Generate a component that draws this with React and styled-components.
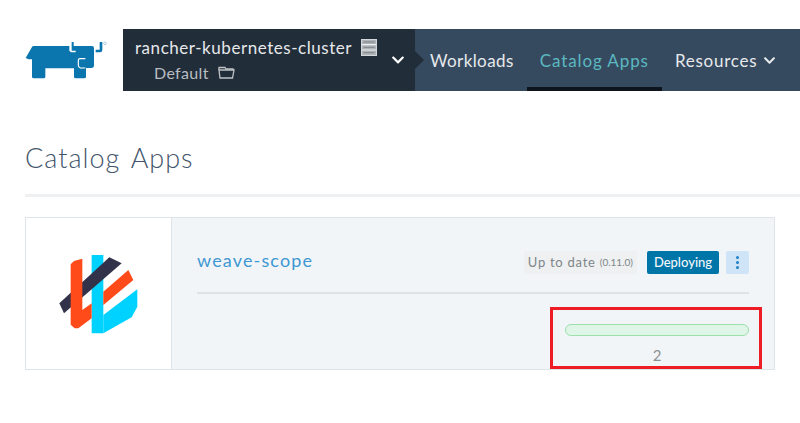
import React from "react";
import styled, { createGlobalStyle } from "styled-components";
import { FaChevronDown } from "react-icons/fa";

const GlobalStyle = createGlobalStyle`
  html, body { margin: 0; padding: 0; background: #fff; }
  body { font-family: "Lato", "Open Sans", sans-serif; width: 800px; height: 423px; overflow: hidden; }
`;

const Page = styled.div`
  padding-top: 29px;
`;

const Header = styled.header`
  display: flex;
  height: 62px;
  align-items: stretch;
`;

const LogoSlot = styled.div`
  width: 123px;
  flex: none;
  display: flex;
  align-items: center;
  padding-left: 20px;
  box-sizing: border-box;
`;

const ClusterBox = styled.div`
  width: 292px;
  flex: none;
  background: #222d3a;
  color: #e6e8ea;
  position: relative;
  display: flex;
  align-items: center;
  justify-content: space-between;
  padding: 0 10px 0 12px;
  box-sizing: border-box;

  &::after {
    content: "";
    position: absolute;
    right: -9px;
    top: 22px;
    border-left: 9px solid #222d3a;
    border-top: 9px solid transparent;
    border-bottom: 9px solid transparent;
  }
`;

const ClusterText = styled.div`
  display: flex;
  flex-direction: column;
  gap: 5px;
`;

const ClusterLine = styled.div`
  display: flex;
  align-items: center;
  gap: ${(p) => p.$gap || 9}px;
  font-size: ${(p) => p.$size || 17}px;
  letter-spacing: ${(p) => p.$spacing || 0.55}px;
  line-height: 20px;
  margin-left: ${(p) => p.$indent || 0}px;
  color: ${(p) => p.$color || "#e6e8ea"};
`;

const Nav = styled.nav`
  flex: 1;
  background: #364a5f;
  display: flex;
  padding-left: 2px;
`;

const NavItem = styled.div`
  display: flex;
  align-items: center;
  gap: 6px;
  padding: 0 13px;
  font-size: 17px;
  letter-spacing: ${(p) => p.$spacing}px;
  color: ${(p) => (p.$active ? "#5bb8c0" : "#e6e9ec")};
  border-bottom: 4px solid ${(p) => (p.$active ? "#0e141b" : "transparent")};
  border-top: 4px solid transparent;
`;

const Main = styled.main`
  padding-left: 25px;
`;

const Title = styled.h1`
  margin: 0;
  padding-top: 50px;
  height: 53px;
  font-size: 27px;
  line-height: 34px;
  font-weight: 300;
  letter-spacing: 1px;
  word-spacing: 3px;
  color: #43556b;
  border-bottom: 3px solid #eef0f1;
`;

const Card = styled.section`
  display: flex;
  width: 750px;
  height: 153px;
  margin-top: 20px;
  box-sizing: border-box;
  border: 1px solid #dfe4e8;
  background: #f2f5f7;
  position: relative;
`;

const IconPane = styled.div`
  width: 146px;
  flex: none;
  background: #fff;
  border-right: 1px solid #dfe4e8;
  display: flex;
  align-items: center;
  justify-content: center;
  padding: 3px 1px 0 0;
  box-sizing: border-box;
`;

const Body = styled.div`
  flex: 1;
  padding: 0 25px;
  display: flex;
  flex-direction: column;
`;

const TitleRow = styled.div`
  height: 76px;
  display: flex;
  align-items: center;
  justify-content: space-between;
  border-bottom: 2px solid #dfe3e6;
  padding-top: 14px;
  box-sizing: border-box;
`;

const AppName = styled.a`
  font-size: 18px;
  letter-spacing: 1.15px;
  color: #3d98d3;
  margin-bottom: 4px;
`;

const Actions = styled.div`
  display: flex;
  align-items: center;
  gap: 7px;
  margin-top: 1px;
`;

const Upgrade = styled.span`
  background: #eef0f1;
  color: #7f8689;
  font-size: 13px;
  letter-spacing: 0.75px;
  height: 23px;
  line-height: 23px;
  padding: 0 4px;
  margin-right: 3px;
  border-radius: 2px;
  display: flex;
  align-items: center;
  gap: 4px;

  small {
    font-size: 10px;
    letter-spacing: 0;
  }
`;

const StateBadge = styled.span`
  background: #0075a8;
  color: #f2f7fa;
  font-size: 13px;
  font-weight: 500;
  height: 23px;
  line-height: 23px;
  border-radius: 2px;
  width: 72px;
  text-align: center;
`;

const MoreButton = styled.button`
  width: 23px;
  height: 23px;
  border: 0;
  padding: 0;
  background: #cfe4f6;
  border-radius: 2px;
  display: flex;
  flex-direction: column;
  align-items: center;
  justify-content: center;
  gap: 2px;

  i {
    display: block;
    width: 3px;
    height: 3px;
    border-radius: 50%;
    background: #1f7fc4;
  }
`;

const Stats = styled.div`
  align-self: flex-end;
  width: 184px;
  margin-top: 30px;
  text-align: center;
`;

const Bar = styled.div`
  height: 10px;
  background: #dff5e8;
  border: 1px solid #9be0ad;
  border-radius: 6px;
`;

const Count = styled.div`
  margin-top: 10px;
  font-size: 15px;
  line-height: 18px;
  color: #8b9094;
`;

const Highlight = styled.div`
  position: absolute;
  left: 524px;
  top: 89px;
  width: 212px;
  height: 62px;
  box-sizing: border-box;
  border: 3px solid #ee1c25;
`;

const RancherLogo = () => (
  <svg width="96" height="48" viewBox="0 0 288 144">
    <path
      fill="#0b76ad"
      d="M17 66 L36 33 Q37 30 41 30 L148 30 L148 44 L153 49 L167 49 L167 44 L155 44 L155 18 L161 18 L161 30 L216 30 Q222 30 222 36 L222 88 Q222 96 214 96 L198 96 L198 122 Q198 127 193 127 L167 127 Q162 127 162 122 L162 97 L76 97 L76 122 Q76 127 71 127 L41 127 Q36 127 36 122 L36 70 L26 70 Z"
    />
    <path fill="none" stroke="#fff" strokeWidth="3.5" d="M196 68 L180 68 Q175 68 175 73 L175 88 Q175 94 181 96 L196 96" />
    <path fill="#0b76ad" d="M227 41 L239 41 L239 18 L247 18 L247 42 Q247 49 240 49 L227 49 Z" />
    <circle cx="255" cy="22" r="4" fill="none" stroke="#6fa9c9" strokeWidth="1.5" />
  </svg>
);

const ServerIcon = () => (
  <svg width="16" height="17" viewBox="0 0 16 17">
    <rect x="0.5" y="0.5" width="15" height="16" fill="#aeb3b7" stroke="#d4d7d9" />
    <path d="M1 5.6H15M1 11H15" stroke="#eceef0" strokeWidth="1.1" />
    <path d="M2.5 3H13.5M2.5 8.3H13.5M2.5 13.7H13.5" stroke="#7c8389" strokeWidth="1" />
  </svg>
);

const FolderIcon = () => (
  <svg width="17" height="13" viewBox="0 0 17 13" fill="none" stroke="#bfc3c6" strokeWidth="1.3">
    <path d="M1 4 V1.5 H7 L8 3 H15 V4" />
    <path d="M1 4 H16 L14.5 12 H2 Z" />
  </svg>
);

const WeaveLogo = () => (
  <svg width="96" height="90" viewBox="0 0 288 270">
    <path fill="#00d2ff" d="M125 15 H160 V250 H125 Z" />
    <path fill="#32324b" d="M28 160 L178 22 L215 40 L42 190 Z" />
    <path fill="#ff4b19" d="M62 43 L72 33 L97 26 V180 L125 160 V205 L85 235 H74 L62 224 Z" />
    <path fill="#ff4b19" d="M160 125 L235 60 L250 90 L160 165 Z" />
    <path fill="#00d2ff" d="M160 195 L262 118 V170 L245 202 L160 250 Z" />
  </svg>
);

const App = () => (
  <Page>
    <GlobalStyle />
    <Header>
      <LogoSlot>
        <RancherLogo />
      </LogoSlot>
      <ClusterBox>
        <ClusterText>
          <ClusterLine>
            rancher-kubernetes-cluster <ServerIcon />
          </ClusterLine>
          <ClusterLine $indent={19} $size={16} $gap={9} $spacing={0.35} $color="#b9bdc1">
            Default <FolderIcon />
          </ClusterLine>
        </ClusterText>
        <FaChevronDown color="#fff" size={14} />
      </ClusterBox>
      <Nav>
        <NavItem $spacing={0.4}>Workloads</NavItem>
        <NavItem $active $spacing={0.9}>
          Catalog Apps
        </NavItem>
        <NavItem $spacing={0.75}>
          Resources <FaChevronDown size={13} />
        </NavItem>
      </Nav>
    </Header>
    <Main>
      <Title>Catalog Apps</Title>
      <Card>
        <IconPane>
          <WeaveLogo />
        </IconPane>
        <Body>
          <TitleRow>
            <AppName>weave-scope</AppName>
            <Actions>
              <Upgrade>
                Up to date <small>(0.11.0)</small>
              </Upgrade>
              <StateBadge>Deploying</StateBadge>
              <MoreButton aria-label="More">
                <i />
                <i />
                <i />
              </MoreButton>
            </Actions>
          </TitleRow>
          <Stats>
            <Bar />
            <Count>2</Count>
          </Stats>
        </Body>
        <Highlight />
      </Card>
    </Main>
  </Page>
);

export default App;
